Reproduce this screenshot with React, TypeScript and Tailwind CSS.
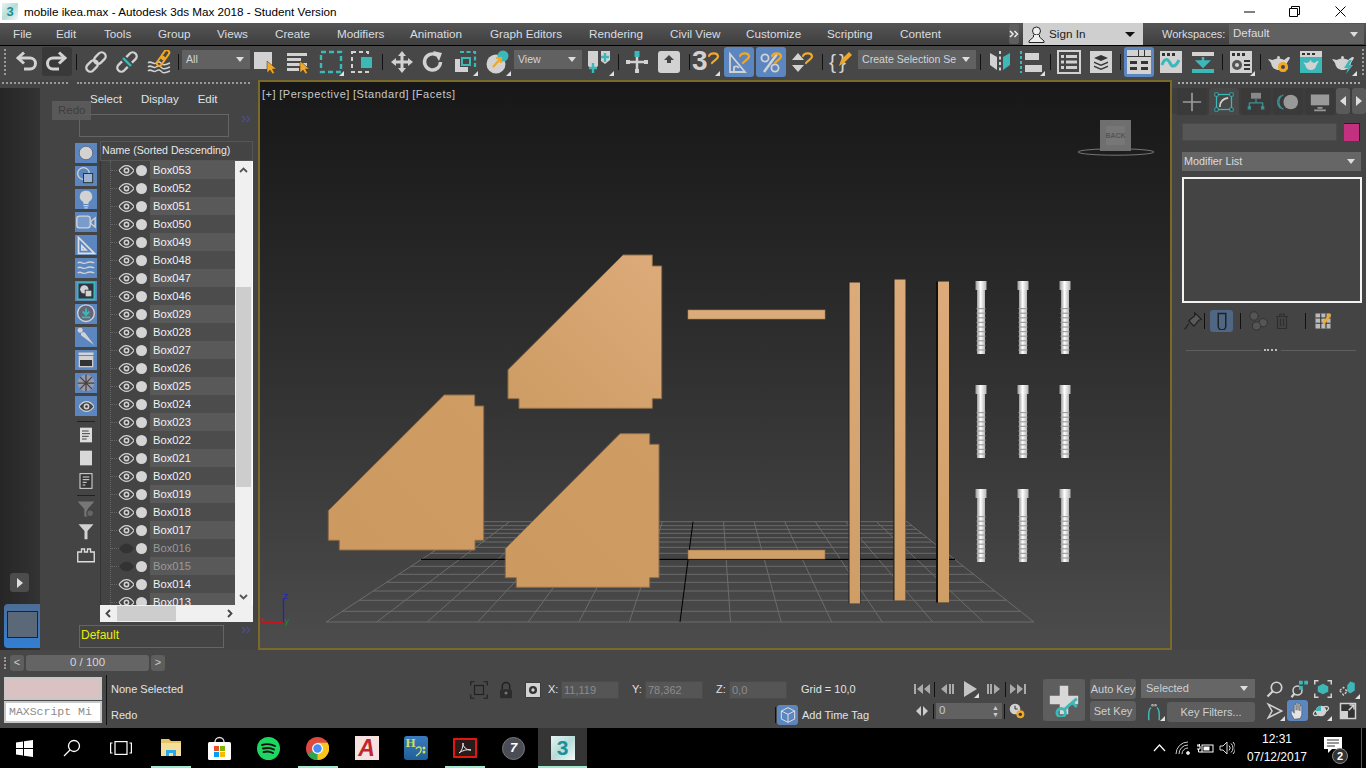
import React from "react";

const L = "#d2d2d2", T = "#3db8b8", O = "#f0a826";
type P = { children?: React.ReactNode };
const I = ({ children, s = 24 }: P & { s?: number }) => (
  <svg width={s} height={s} viewBox="0 0 24 24" fill="none" className="block shrink-0">{children}</svg>
);
const S = ({ c = "", children, fly }: P & { c?: string; fly?: boolean }) => (
  <div className={"relative h-full flex items-center justify-center shrink-0 " + c}>
    {children}
    {fly && <span className="absolute right-[2px] bottom-[1px] w-[5px] h-[5px] bg-[#e0e0e0] [clip-path:polygon(100%_0,100%_100%,0_100%)]" />}
  </div>
);
const Sep = ({ c }: { c: string }) => (
  <div className={"h-full flex items-center justify-center shrink-0 " + c}><div className="w-px h-[16px] bg-[#111]" /></div>
);
const Caret = () => <span className="w-0 h-0 shrink-0 border-l-[4px] border-r-[4px] border-t-[5px] border-l-transparent border-r-transparent border-t-[#ddd]" />;
const Dbl = ({ c = "#4c4c80" }: { c?: string }) => (
  <svg width="10" height="8" viewBox="0 0 10 8" fill="none" stroke={c} strokeWidth="1.500" className="block shrink-0"><path d="M1 1l3 3-3 3M5.500 1l3 3-3 3" /></svg>
);
const Drop = ({ c, t }: { c: string; t: string }) => (
  <div className={"h-[19px] bg-[#616161] flex items-center justify-between gap-[2px] pl-[4px] pr-[6px] shrink-0 " + c}>
    <span className="text-[10.6px] whitespace-nowrap text-[#cfd4d8]">{t}</span><Caret />
  </div>
);
const Hook = () => <path d="M13 6c1-3 8-4 9 0 .5 3-4 4-6 7" stroke={O} strokeWidth="2.2" strokeLinecap="round" />;
const Cursor = () => <path d="M14 11v12l3-3 2.5 4 2-1-2-4h4z" fill={O} stroke="#333" strokeWidth=".5" />;
const Teapot = ({ f = L }: { f?: string }) => (
  <><path d="M6 10c3-2 8-2 11 0l4-3c1 0 2 0 2 1l-3 5c-1 5-4 7-8 7s-7-2-8-7L1 9z" fill={f} /><circle cx="11.5" cy="7.5" r="1.5" fill={f} /></>
);

const Grip = () => <div className="w-[2px] h-[26px] border-l-2 border-dotted border-[#999]" />;

function Toolbar() {
  return (
    <div className="h-[34px] flex items-center bg-[#474747] shrink-0 overflow-hidden pb-[3px]">
      <S c="w-[10px]"><Grip /></S>
      <S c="w-[31px]"><I><path d="M4 8h12a5.5 5.5 0 0 1 0 11h-6" stroke={L} strokeWidth="3" /><path d="M10 2.5L4 8l6 5.5" stroke={L} strokeWidth="3" /></I></S>
      <S c="w-[31px]"><div className="w-[30px] h-[29px] rounded-[3px] bg-[#393939] flex items-center justify-center"><I><g transform="matrix(-1 0 0 1 24 0)"><path d="M4 8h12a5.5 5.5 0 0 1 0 11h-6" stroke={L} strokeWidth="3" /><path d="M10 2.5L4 8l6 5.5" stroke={L} strokeWidth="3" /></g></I></div></S>
      <Sep c="w-[8px]" />
      <S c="w-[31px]"><I><g transform="rotate(-45 12 12)" stroke={L} strokeWidth="2.4"><rect x="0" y="8" width="13" height="8" rx="4" /><rect x="11" y="8" width="13" height="8" rx="4" /></g></I></S>
      <S c="w-[32px]"><I><g transform="rotate(-45 12 12)" stroke={L} strokeWidth="2.4"><path d="M9 8H4a4 4 0 0 0 0 8h5M15 8h5a4 4 0 0 1 0 8h-5" /></g><path d="M8 8l8 8" stroke={T} strokeWidth="2.4" /></I></S>
      <S c="w-[32px]"><I><path d="M1 13c3-3 5 2 8 0s4-1 6 1 5 0 8-1M1 17c3-3 5 2 8 0s4-1 6 1 5 0 8-1M1 21c3-3 5 2 8 0s4-1 6 1 5 0 8-1" stroke={L} strokeWidth="1.5" /><g transform="rotate(-55 16 8)" stroke={O} strokeWidth="2"><rect x="7" y="5.5" width="10" height="5" rx="2.5" /><rect x="15" y="5.5" width="10" height="5" rx="2.5" /></g></I></S>
      <Sep c="w-[6px]" />
      <div className="ml-[1px] shrink-0 mb-[4px]"><Drop c="w-[68px]" t="All" /></div>
      <S c="w-[30px]"><I><rect x="1" y="2" width="18" height="17" fill={L} /><Cursor /></I></S>
      <S c="w-[36px]"><I><path d="M1 3h20v3H1zM1 8h14v3H1zM1 13h20v3H1zM1 18h12v3H1z" fill={L} /><Cursor /></I></S>
      <S c="w-[30px]" fly><I><rect x="2" y="2" width="20" height="20" stroke={T} strokeWidth="2.4" strokeDasharray="5 3" /></I></S>
      <S c="w-[32px]"><I><rect x="2" y="2" width="16" height="20" stroke={L} strokeWidth="2" strokeDasharray="4 3" /><rect x="11" y="7" width="11" height="11" fill={T} /></I></S>
      <Sep c="w-[8px]" />
      <S c="w-[31px]"><I><path d="M12 1l4 5h-2.5v4.5H18V8l5 4-5 4v-2.5h-4.5V18H16l-4 5-4-5h2.5v-4.5H6V16l-5-4 5-4v2.5h4.5V6H8z" fill={L} /></I></S>
      <S c="w-[32px]"><I><path d="M19.5 12a8 8 0 1 1-4-7" stroke={L} strokeWidth="3.4" /><path d="M12 1l9 2-3 8z" fill={L} /></I></S>
      <S c="w-[31px]" fly><I><path d="M7 2h15v15" stroke={T} strokeWidth="2.2" strokeDasharray="4 2.5" /><path d="M2 22V9h5v8h8v5z" fill={L} /><rect x="9" y="8" width="8" height="7" fill="none" stroke={T} strokeWidth="2" /></I></S>
      <S c="w-[33px]" fly><I><circle cx="11" cy="14" r="9.5" fill={L} /><circle cx="18" cy="6" r="5.5" fill={T} /><path d="M8 17l8-9M11 8h5v5" stroke={O} strokeWidth="2.2" /></I></S>
      <div className="ml-[1px] shrink-0 mb-[4px]"><Drop c="w-[68px]" t="View" /></div>
      <S c="w-[34px]" fly><I><path d="M1 1h10v15l-5 4-5-4z" fill={L} /><path d="M14 1h9v9l-5 4-4-3z" fill={L} /><path d="M6 13v10M2 18h8M18 3v9M14 7h8" stroke={T} strokeWidth="2.4" /></I></S>
      <Sep c="w-[4px]" />
      <S c="w-[34px]"><I><path d="M1 12h22M12 6v16" stroke={L} strokeWidth="2.5" /><rect x="9.5" y="1" width="5" height="6" fill={T} /><rect x="1" y="10" width="4" height="4" fill={L} /><rect x="19" y="10" width="4" height="4" fill={L} /><rect x="10" y="19" width="4" height="4" fill={L} /></I></S>
      <S c="w-[30px]"><I><rect x="1" y="1" width="22" height="22" rx="3" fill={L} /><path d="M12 5l-5 5h3v3h4v-3h3z" fill="#444" /></I></S>
      <Sep c="w-[10px]" />
      <S c="w-[28px]" fly><div className="relative w-[24px] h-[24px]"><span className="absolute left-[-4px] top-[-5px] text-[28px] leading-[32px] font-bold text-[#d2d2d2] font-['Liberation_Sans']">3</span><div className="absolute inset-0"><I><Hook /></I></div></div></S>
      <div className="ml-[2px] w-[30px] h-[30px] rounded-[3px] bg-[#5b86bf] flex items-center justify-center shrink-0 mt-[1px]"><I><path d="M3 22V4l15 18zM7 22v-5a4 4 0 0 1 5 1" fill="none" stroke={L} strokeWidth="1.8" /><Hook /></I></div>
      <div className="ml-[2px] w-[30px] h-[30px] rounded-[3px] bg-[#5b86bf] flex items-center justify-center shrink-0 mt-[1px]"><I><circle cx="6" cy="8" r="3.6" stroke={L} strokeWidth="1.8" /><circle cx="16" cy="18" r="3.6" stroke={L} strokeWidth="1.8" /><path d="M5 22L18 4" stroke={L} strokeWidth="2.4" /><Hook /></I></div>
      <S c="w-[32px]"><I><path d="M8 3l6 7H2zM8 22l6-7H2z" fill={L} /><Hook /></I></S>
      <Sep c="w-[8px]" />
      <S c="w-[30px]"><div className="relative w-[24px] h-[24px]"><span className="absolute left-0 top-[-1px] text-[21px] leading-[25px] text-[#d2d2d2] font-['Liberation_Sans'] tracking-[3px]">{"{}"}</span><div className="absolute inset-0"><I><path d="M10 16l2-6 8-8 3 3-8 8z" fill={O} /></I></div></div></S>
      <div className="ml-[2px] shrink-0 mb-[4px]"><Drop c="w-[118px]" t="Create Selection Se" /></div>
      <Sep c="w-[8px]" />
      <S c="w-[31px]"><I><path d="M2 3l7 4v13l-7-5z" fill={L} /><path d="M12 1v22" stroke={L} strokeWidth="2" strokeDasharray="3 2.5" /><path d="M22 3l-7 4v13l7-5z" fill={T} /></I></S>
      <S c="w-[32px]" fly><I><path d="M2 1v22" stroke={T} strokeWidth="2" strokeDasharray="3 2" /><path d="M6 3h14v7H6zM6 15h17v7H6z" fill={L} /></I></S>
      <Sep c="w-[6px]" />
      <S c="w-[32px]"><I><rect x="1" y="1" width="22" height="22" fill="none" stroke={L} strokeWidth="2" /><path d="M4 5h3v3H4zM9 5h11v3H9zM4 10.500h3v3H4zM9 10.500h11v3H9zM4 16h3v3H4zM9 16h11v3H9z" fill={L} /></I></S>
      <S c="w-[32px]"><I><rect x="1" y="1" width="22" height="22" fill={L} /><path d="M12 5l7 3-7 3-7-3zM5 11.500l7 3 7-3v1.500l-7 3-7-3zM5 15.500l7 3 7-3v1.500l-7 3-7-3z" fill="#333" /></I></S>
      <Sep c="w-[6px]" />
      <div className="ml-[1px] w-[30px] h-[30px] rounded-[3px] border-[3px] border-[#5b86bf] flex items-center justify-center shrink-0 mt-[1px]"><I><rect x="0" y="0" width="24" height="24" fill={L} /><path d="M11 0h1v6h-1zM17 0h1v6h-1zM0 6h24v1H0zM3 11h7v3H3zM14 11h7v3H14zM3 17h7v3H3zM14 17h7v3H14z" fill="#333" /></I></div>
      <S c="w-[33px]"><I><rect x="1" y="1" width="22" height="22" fill={L} /><path d="M3 3h3v3H3zM8 3h3v3H8zM13 3h3v3h-3z" fill="#333" /><path d="M3 15c3-8 6-6 8-2s5 5 9-3" stroke={T} strokeWidth="3" /></I></S>
      <S c="w-[32px]"><I><rect x="1" y="2" width="22" height="4" fill={L} /><rect x="1" y="19" width="22" height="4" fill={T} /><path d="M12 7v7M7 11.500l5 5 5-5z" stroke={T} strokeWidth="2.5" fill={T} /></I></S>
      <Sep c="w-[6px]" />
      <S c="w-[32px]" fly><I><rect x="1" y="1" width="22" height="22" fill={L} /><path d="M3 3h3v3H3zM8 3h3v3H8zM13 3h3v3h-3zM15 10h6v2h-6zM15 14h6v2h-6zM15 18h6v2h-6z" fill="#333" /><circle cx="8" cy="15" r="5" fill="#555" /><circle cx="8" cy="15" r="2" fill={L} /></I></S>
      <Sep c="w-[6px]" />
      <S c="w-[32px]"><I><Teapot /><circle cx="16" cy="17" r="5" fill={O} /><circle cx="16" cy="17" r="4" fill="none" stroke={O} strokeWidth="2" strokeDasharray="2 1.500" /><circle cx="16" cy="17" r="2" fill="#444" /></I></S>
      <S c="w-[32px]"><I><rect x="1" y="1" width="22" height="22" fill={T} /><rect x="1" y="1" width="22" height="6" fill={L} /><path d="M3 3h3v2H3zM8 3h3v2H8zM13 3h3v2h-3z" fill="#333" /><g transform="translate(3.500 6) scale(.7)"><Teapot /></g></I></S>
      <S c="w-[32px]" fly><I><Teapot /><path d="M18 10l-5 8h4l-2 6 7-9h-4l3-5z" fill={T} /></I></S>
      <div className="w-[7px] flex justify-center"><Grip /></div>
    </div>
  );
}

const BtnBlue = ({ children }: P) => (
  <div className="w-[22px] h-[20px] bg-[#5b86bf] flex items-center justify-center mb-[3px]">{children}</div>
);
const F = { stroke: L, strokeWidth: 1.6, fill: "none" };

function Filters() {
  return (
    <div className="w-[25px] shrink-0 pt-[2px] flex flex-col items-start">
      <BtnBlue><I s={18}><circle cx="12" cy="12" r="9" fill={L} stroke="#444" strokeWidth=".8" /></I></BtnBlue>
      <BtnBlue><I s={20}><circle cx="9" cy="9" r="7" {...F} /><rect x="9" y="9" width="11" height="11" fill="#9db4d4" stroke="#333" strokeWidth="1.200" /></I></BtnBlue>
      <BtnBlue><I s={20}><path d="M12 2a7 7 0 0 0-4 13c1 1 1 2 1 3h6c0-1 0-2 1-3a7 7 0 0 0-4-13z" fill={L} /><path d="M9 20h6M10 22.500h4" stroke={L} strokeWidth="1.500" /></I></BtnBlue>
      <BtnBlue><I s={20}><rect x="1" y="5" width="16" height="14" rx="3" {...F} fill="#7a9ccc" /><path d="M18 11l5-4v11l-5-4z" {...F} /></I></BtnBlue>
      <BtnBlue><I s={20}><path d="M3 3v19h19zM7 13v5h5z" {...F} strokeWidth={2} stroke="#ddd" /></I></BtnBlue>
      <BtnBlue><I s={20}><path d="M2 6c4-3 6 2 10 0s6-2 10 0M2 12c4-3 6 2 10 0s6-2 10 0M2 18c4-3 6 2 10 0s6-2 10 0" {...F} /></I></BtnBlue>
      <BtnBlue><I s={20}><rect x="2" y="2" width="20" height="20" stroke={T} strokeWidth="2" fill="#334" /><circle cx="10" cy="10" r="5" fill={L} /><rect x="11" y="11" width="8" height="8" fill={L} stroke="#333" /></I></BtnBlue>
      <BtnBlue><I s={20}><circle cx="12" cy="11" r="10" {...F} fill="#667" /><path d="M12 5v7M8 9l4 4 4-4M7 16h10" stroke={T} strokeWidth="2.200" /></I></BtnBlue>
      <BtnBlue><I s={20}><circle cx="5" cy="4" r="3" fill={L} /><path d="M6 7l4-1 12 16L6 10z" fill={L} /></I></BtnBlue>
      <BtnBlue><I s={20}><path d="M3 3h18v3H3z" fill={L} /><rect x="4" y="8" width="16" height="12" fill="#333" stroke={L} strokeWidth="1.500" /><path d="M4 8h16v4H4z" fill={L} /></I></BtnBlue>
      <BtnBlue><I s={20}><circle cx="12" cy="12" r="10" fill="#99a" /><path d="M12 2v20M2 12h20M5 5l14 14M19 5L5 19" stroke="#444" strokeWidth="1.500" /></I></BtnBlue>
      <BtnBlue><Eye /></BtnBlue>
      <div className="w-[18px] h-px bg-[#222] mt-[2px] ml-[2px]" />
      <div className="w-[22px] h-[22px] mt-[2px] flex items-center justify-center"><I s={16}><rect x="3" y="1" width="18" height="22" fill="#ddd" /><path d="M6 6h10M6 10h12M6 14h10M6 18h7" stroke="#444" strokeWidth="1.500" /></I></div>
      <div className="w-[22px] h-[22px] mt-[1px] flex items-center justify-center"><I s={16}><rect x="3" y="1" width="18" height="22" fill="#d8d8d8" /></I></div>
      <div className="w-[22px] h-[22px] mt-[1px] flex items-center justify-center"><I s={16}><rect x="3" y="1" width="18" height="22" fill="#333" stroke="#ddd" strokeWidth="1.500" /><path d="M7 6h10M7 10h10M7 14h6M7 18h4" stroke="#ddd" strokeWidth="1.500" /></I></div>
      <div className="w-[18px] h-px bg-[#222] mt-[3px] ml-[2px]" />
      <div className="w-[22px] h-[22px] mt-[2px] flex items-center justify-center"><I s={20}><path d="M2 3h20l-8 9v9h-4v-9z" fill="#777" /><circle cx="17" cy="17" r="4" fill="#666" stroke="#444" strokeWidth="1.500" /></I></div>
      <div className="w-[22px] h-[22px] mt-[0px] flex items-center justify-center"><I s={18}><path d="M2 3h20l-8 9v11h-4V12z" fill={L} /></I></div>
      <div className="w-[22px] h-[22px] mt-[2px] flex items-center justify-center"><I s={18}><path d="M1 8h5V4h4v4h4V4h4v4h5v13H1z" fill="none" stroke="#ddd" strokeWidth="1.800" /></I></div>
    </div>
  );
}

const Eye = ({ off }: { off?: boolean }) => (
  <svg width="15" height="11" viewBox="0 0 15 11" className="block shrink-0">
    <path d="M0 5.500C3 1.500 5 .7 7.500.7s4.500.8 7.500 4.800c-3 4-5 4.800-7.500 4.800S3 9.500 0 5.500z" fill={off ? "#333" : "#444"} stroke={off ? "none" : L} strokeWidth="1.200" />
    {!off && <circle cx="7.500" cy="5.500" r="2.900" fill={L} />}
    {!off && <circle cx="7.500" cy="5.500" r="1.300" fill="#333" />}
  </svg>
);

const names = ["053","052","051","050","049","048","047","046","029","028","027","026","025","024","023","022","021","020","019","018","017","016","015","014","013"];

function Explorer() {
  return (
    <div className="relative w-[218px] bg-[#444] flex flex-col shrink-0">
      <div className="h-[24px] pl-[50px] flex items-center gap-[19px] text-[11.5px] text-[#dfe3e6]">
        <span>Select</span><span>Display</span><span>Edit</span>
      </div>
      <div className="h-[29px] flex items-start pt-[2px] pl-[39px]">
        <div className="w-[150px] h-[23px] border border-[#656565]" />
        <span className="ml-[12px] mt-[1px]"><Dbl /></span>
      </div>
      <div className="flex pl-[35px]">
        <Filters />
        <div className="w-[153px] shrink-0">
          <div className="h-[20px] border border-[#565656] bg-[#444] pl-[1px] text-[10.6px] text-[#e6e8ea] flex items-center whitespace-nowrap">Name (Sorted Descending)</div>
          <div className="flex h-[444px] bg-white">
            <div className="relative w-[135px] overflow-hidden bg-[#444] border-l border-[#333]">
              <div className="absolute left-[9px] top-0 bottom-0 border-l border-dotted border-[#666]" />
              {names.map((n, i) => {
                const off = n === "016" || n === "015";
                return (
                  <div key={n} className="flex items-center h-[18px]">
                    <div className="ml-[10px] w-[8px] border-t border-dotted border-[#666]" />
                    <div className="w-[15px] flex justify-center"><Eye off={off} /></div>
                    <div className="w-[15px] flex justify-center"><span className="w-[11px] h-[11px] rounded-full bg-[#d4d4d4]" /></div>
                    <div className={(i % 2 === 0 ? "bg-[#595959] " : "bg-[#4c4c4c] ") + (off ? "text-[#9a9a9a] " : "text-[#f2f2f2] ") + "h-[18px] flex-1 pl-[3px] text-[11.2px] leading-[18px] ml-[1px]"}>{"Box" + n}</div>
                  </div>
                );
              })}
            </div>
            <div className="relative w-[17px] bg-[#f0f0f0] pt-[126px]">
              <div className="h-[200px] bg-[#cdcdcd] mx-[1px]" />
              <svg className="absolute left-[4px] top-[6px]" width="9" height="6" viewBox="0 0 9 6"><path d="M1 5l3.500-3.500L8 5" stroke="#555" strokeWidth="1.800" fill="none" /></svg>
              <svg className="absolute left-[4px] bottom-[5px]" width="9" height="6" viewBox="0 0 9 6"><path d="M1 1l3.500 3.500L8 1" stroke="#555" strokeWidth="1.800" fill="none" /></svg>
            </div>
          </div>
          <div className="h-[17px] bg-[#f0f0f0] flex items-center relative">
            <div className="ml-[17px] w-[59px] h-[15px] bg-[#cdcdcd]" />
            <svg className="absolute left-[5px] top-[4px]" width="6" height="9" viewBox="0 0 6 9"><path d="M5 1L1.500 4.500 5 8" stroke="#444" strokeWidth="1.800" fill="none" /></svg>
            <svg className="absolute right-[20px] top-[4px]" width="6" height="9" viewBox="0 0 6 9"><path d="M1 1l3.500 3.500L1 8" stroke="#444" strokeWidth="1.800" fill="none" /></svg>
          </div>
        </div>
      </div>
      <div className="flex pl-[39px] pt-[3px]">
        <div className="w-[145px] h-[23px] border border-[#656565] pl-[1px] text-[12px] leading-[19px] text-[#e8f000]">Default</div>
        <span className="ml-[17px] mt-[1px]"><Dbl /></span>
      </div>
      <div className="absolute left-[12px] top-[13px] w-[39px] h-[19px] bg-[#5c5c5c]/90 text-[11.5px] text-[#3e3e3e] pl-[6px] leading-[19px]">Redo</div>
    </div>
  );
}

const hl = [521.7, 525.7, 529.3, 533.3, 537.7, 542, 547.3, 553.3, 559.3, 566.3, 574.3, 582.3, 591, 600.3, 611.3, 622];

const pts = {
  a: "623,255 652.3,255 652.3,266 661.7,266 661.7,398.7 652.3,398.7 652.3,408.3 519,408.3 519,398.7 508,398.7 508,369.7",
  b: "444.3,395 474.7,395 474.7,406 483.7,406 483.7,540.3 475,540.3 475,550 339.3,550 339.3,540.3 328.3,540.3 328.3,510.7",
  c: "620,433.7 649.7,433.7 649.7,444.3 659,444.3 659,577.7 649.7,577.7 649.7,587.3 516.3,587.3 516.3,577.7 505.3,577.7 505.3,548.7",
};

const Screw = ({ x, y }: { x: number; y: number }) => (
  <g transform={`translate(${x} ${y})`}>
    <rect x="-5.500" y="0" width="11" height="9" fill="url(#sw)" />
    <rect x="-4" y="9" width="8" height="18" fill="url(#sw)" />
    <rect x="-4" y="26" width="8" height="47" fill="url(#sw)" />
    {[0, 1, 2, 3, 4, 5, 6, 7, 8, 9].map((i) => <rect key={i} x="-4.500" y={27 + i * 4.6} width="9" height="1.200" fill="#a0a0a0" />)}
  </g>
);

function Viewport() {
  return (
    <div className="relative w-[914px] border-2 border-[#7a6a2a] bg-gradient-to-b from-[#171717] via-[#303030] to-[#4c4c4c] shrink-0">
      <svg width="910" height="566" viewBox="260 82 910 566" className="block">
        <defs>
          <linearGradient id="pa" x1="1" y1="0" x2="0" y2="1"><stop offset="0" stopColor="#dcab7a" /><stop offset="1" stopColor="#cd9b63" /></linearGradient>
          <linearGradient id="pb" x1="1" y1="0" x2="0" y2="1"><stop offset="0" stopColor="#cf9d64" /><stop offset="1" stopColor="#cc9960" /></linearGradient>
          <linearGradient id="pv" x1="0" y1="0" x2="0" y2="1"><stop offset="0" stopColor="#dcab7a" /><stop offset="1" stopColor="#cf9d66" /></linearGradient>
          <linearGradient id="sw" x1="0" y1="0" x2="1" y2="0"><stop offset="0" stopColor="#9a9a9a" /><stop offset=".45" stopColor="#ffffff" /><stop offset="1" stopColor="#b5b5b5" /></linearGradient>
        </defs>
        {hl.map((y) => {
          const t = (622 - y) / 100.3;
          return <line key={y} x1={326 + 153 * t} x2={1034 - 127 * t} y1={y} y2={y} stroke="#6c6c6c" strokeWidth="1" />;
        })}
        {Array.from({ length: 15 }, (_, i) => i).map((i) => (
          <line key={i} x1={326 + i * 50.57} y1={622} x2={479 + i * 30.57} y2={521.7} stroke={i === 7 ? "#000" : "#6c6c6c"} strokeWidth="1" />
        ))}
        <line x1="421" x2="955" y1="559.3" y2="559.3" stroke="#000" strokeWidth="1.200" />
        <polygon points={pts.a} fill="url(#pa)" stroke="#8c6c48" strokeWidth="1" />
        <polygon points={pts.b} fill="url(#pb)" stroke="#8c6c48" strokeWidth="1" />
        <polygon points={pts.c} fill="url(#pb)" stroke="#8c6c48" strokeWidth="1" />
        <rect x="688" y="310" width="137" height="9" fill="#dcab7a" stroke="#a5815a" strokeWidth=".6" />
        <rect x="688" y="550" width="137" height="9" fill="#cf9f68" stroke="#8c6c48" strokeWidth=".6" />
        <rect x="848.500" y="282.500" width="12" height="321" fill="#222" />
        <rect x="849.500" y="282.500" width="10.500" height="321" fill="url(#pv)" />
        <rect x="893.300" y="279.500" width="12.500" height="321" fill="#222" />
        <rect x="894.500" y="279.500" width="11" height="321" fill="url(#pv)" />
        <rect x="936" y="281.500" width="13" height="321" fill="#111" />
        <rect x="938" y="281.500" width="11" height="321" fill="url(#pv)" />
        {[281, 385, 489].map((y) => [981, 1023, 1065].map((x) => <Screw key={x + "-" + y} x={x} y={y} />))}
        <ellipse cx="1116" cy="152" rx="38" ry="3.200" fill="none" stroke="#777" strokeWidth="1" />
        <rect x="1100" y="120" width="31" height="31" fill="#6f6f6f" />
        <rect x="1106" y="126" width="19" height="19" fill="#777" />
        <text x="1115.500" y="138" textAnchor="middle" fontSize="7" fontWeight="700" fill="#555" fontFamily="Liberation Sans, sans-serif">BACK</text>
        <path d="M283.500 622.500H263" stroke="#c8141a" strokeWidth="1.300" />
        <path d="M283.500 622.500V598" stroke="#2020d0" strokeWidth="1.300" />
        <text x="259" y="623" fontSize="9" fill="#c8141a" fontFamily="Liberation Sans, sans-serif">x</text>
        <text x="283.500" y="599" fontSize="9" fill="#2020d0" fontFamily="Liberation Sans, sans-serif">z</text>
        <text x="284.500" y="624" fontSize="9" fill="#1e8a1e" fontFamily="Liberation Sans, sans-serif">y</text>
      </svg>
      <div className="absolute left-[2px] top-[5px] flex gap-[3px] text-[11px] leading-[14px] tracking-[0.55px] text-[#c8c8c8] whitespace-nowrap">
        <span>[+]</span><span>[Perspective]</span><span>[Standard]</span><span>[Facets]</span>
      </div>
    </div>
  );
}

function CmdPanel() {
  const Tab = ({ c, active, children }: P & { c: string; active?: boolean }) => (
    <div className={"w-[30px] h-[27px] rounded-t-[4px] flex items-center justify-center " + (active ? "bg-[#484848] " : "bg-[#3a3a3a] ") + c}>{children}</div>
  );
  const Small = ({ c, children }: P & { c: string }) => <div className={"flex items-center justify-center shrink-0 " + c}>{children}</div>;
  const dark = "#2e2e2e";
  return (
    <div className="w-[194px] bg-[#444] flex flex-col shrink-0 overflow-hidden">
      <div className="h-[8px] pt-[2px] pl-[6px] pr-[6px]"><div className="border-t-2 border-dotted border-[#aaa]" /></div>
      <div className="flex h-[26px] pl-[5px] gap-[2px] bg-[#3d3d3d]">
        <Tab c=""><I s={20}><path d="M12 1v22M1 12h22" stroke="#9b9b9b" strokeWidth="2" /></I></Tab>
        <Tab c="" active><I s={20}><rect x="3" y="3" width="18" height="18" stroke={T} strokeWidth="1.500" /><path d="M1 1h4v4H1zM19 1h4v4h-4zM1 19h4v4H1zM19 19h4v4h-4z" fill="#333" stroke={T} /><path d="M7 18c0-6 3-10 10-11" stroke={L} strokeWidth="2" /></I></Tab>
        <Tab c=""><I s={20}><rect x="6" y="1" width="12" height="7" fill="#888" /><path d="M12 8v5M4 13h16v4M4 13v4" stroke={T} strokeWidth="1.500" opacity=".7" /><rect x="2" y="17" width="4" height="4" fill={T} opacity=".7" /><rect x="18" y="17" width="4" height="4" fill={T} opacity=".7" /></I></Tab>
        <Tab c=""><I s={22}><circle cx="15" cy="12" r="8" fill="#999" /><path d="M7 4a9 9 0 0 0 0 16M4 5a9 9 0 0 0 0 14" stroke={T} strokeWidth="1.200" opacity=".7" /></I></Tab>
        <Tab c=""><I s={20}><rect x="1" y="3" width="22" height="13" fill="#999" /><path d="M9 19h6M5 22h14" stroke="#999" strokeWidth="2" /></I></Tab>
        <div className="w-[14px] h-[26px] rounded-[3px] bg-[#5a5a5a] flex items-center justify-center ml-[-1px]"><span className="w-0 h-0 border-y-[5px] border-y-transparent border-r-[6px] border-r-[#ddd]" /></div>
        <div className="w-[14px] h-[26px] rounded-[3px] bg-[#5a5a5a] flex items-center justify-center"><span className="w-0 h-0 border-y-[5px] border-y-transparent border-l-[6px] border-l-[#ddd]" /></div>
      </div>
      <div className="flex pl-[10px] pt-[9px]">
        <div className="w-[155px] h-[18px] bg-[#565656] border border-[#4a4a4a]" />
        <div className="ml-[7px] w-[16px] h-[18px] bg-[#c2307f] border-t border-r border-[#222]" />
      </div>
      <div className="pl-[10px] pt-[11px]"><div className="w-[179px] h-[19px] bg-[#666] flex items-center justify-between pl-[2px] pr-[6px]"><span className="text-[10.8px] text-[#d9dde0]">Modifier List</span><Caret /></div></div>
      <div className="pl-[10px] pt-[6px]"><div className="w-[180px] h-[126px] border-2 border-[#f2f2f2] bg-[#444]" /></div>
      <div className="flex items-center h-[22px] mt-[7px] pl-[10px]">
        <Small c="w-[22px]"><I s={20}><path d="M14 2l8 8-3 1-4 5-2 2-6-6 2-2 5-4zM7 15l-5 7" stroke="#222" strokeWidth="1.500" fill="#5a5a5a" /></I></Small>
        <div className="w-px h-[16px] bg-[#111]" />
        <Small c="w-[5px]"><span /></Small>
        <div className="w-[23px] h-[22px] rounded-[3px] bg-[#4f6685] flex items-center justify-center"><I s={18}><path d="M7 2h10v17a5 5 0 0 1-10 0z" fill="none" stroke="#222" strokeWidth="2" /></I></div>
        <Small c="w-[7px]"><span /></Small>
        <div className="w-px h-[16px] bg-[#111]" />
        <Small c="w-[36px]"><I s={20}><circle cx="6" cy="6" r="5" fill="#555" stroke={dark} /><circle cx="17" cy="14" r="5" fill="#555" stroke={dark} /><circle cx="9" cy="18" r="5" fill="#555" stroke={dark} /></I></Small>
        <Small c="w-[10px]"><I s={18}><path d="M4 6h16M9 6V3h6v3M6 6v16h12V6M10 9v10M14 9v10" stroke={dark} strokeWidth="1.500" /></I></Small>
        <Small c="w-[18px]"><span /></Small>
        <div className="w-px h-[16px] bg-[#111]" />
        <Small c="w-[34px]"><I s={18}><rect x="2" y="2" width="20" height="20" fill="#bbb" /><path d="M2 8h20M2 15h20M9 2v20M16 2v20" stroke="#333" strokeWidth="1.500" /><path d="M11 15l9-13 3 2-9 13z" fill={O} /></I></Small>
      </div>
      <div className="flex items-center h-[4px] mt-[16px] pl-[14px]">
        <div className="w-[75px] h-px bg-[#5e5e5e]" />
        <div className="w-[13px] ml-[3px] border-t-2 border-dotted border-[#bbb]" />
        <div className="w-[75px] ml-[4px] h-px bg-[#5e5e5e]" />
      </div>
      <div className="flex-1" />
    </div>
  );
}

const Inp = ({ v }: { v: string }) => (
  <div className="w-[58px] h-[18px] bg-[#555] border border-[#4b4b4b] pl-[2px] text-[11px] leading-[17px] text-[#8c8c8c] shrink-0">{v}</div>
);
const Lab = ({ c, t }: { c: string; t: string }) => <span className={"text-[11px] text-[#e0e3e6] shrink-0 " + c}>{t}</span>;

function Bottom() {
  return (
    <div className="h-[78px] bg-[#474747] flex flex-col shrink-0">
      <div className="h-[27px] flex items-start pt-[5px] shrink-0">
        <div className="w-[10px] flex justify-center pt-[2px]"><div className="h-[12px] border-l-2 border-dotted border-[#999]" /></div>
        <div className="w-[14px] h-[16px] rounded-[3px] bg-[#5e5e5e] text-[#ccc] text-[11px] leading-[15px] text-center">{"<"}</div>
        <div className="ml-[2px] w-[123px] h-[16px] rounded-[3px] bg-[#646464] text-[#d4d8dc] text-[11.5px] leading-[15px] text-center">0 / 100</div>
        <div className="ml-[2px] w-[14px] h-[16px] rounded-[3px] bg-[#5e5e5e] text-[#ccc] text-[11px] leading-[15px] text-center">{">"}</div>
      </div>
      <div className="flex flex-1">
        <div className="ml-[4px] w-[98px] shrink-0 flex flex-col gap-[1px]">
          <div className="h-[23px] bg-[#dbc2c2] border-2 border-[#c8c8c8]" />
          <div className="h-[22px] bg-white border-2 border-[#c8c8c8] text-[11.5px] leading-[18px] pl-[3px] text-[#8c8c8c] font-['Liberation_Mono'] overflow-hidden whitespace-nowrap">MAXScript Mi</div>
        </div>
        <div className="ml-[4px] w-px h-[50px] bg-[#111] mt-[-2px]" />
        <div className="ml-[4px] flex-col flex w-[805px] shrink-0">
          <div className="flex items-center h-[25px]">
            <Lab c="w-[354px]" t="None Selected" />
            <S c="w-[27px]"><I s={18}><path d="M1 6V1h5M18 1h5v5M1 18v5h5M18 23h5v-5" stroke="#222" strokeWidth="1.600" /><rect x="6" y="6" width="12" height="12" stroke="#222" strokeWidth="1.600" /></I></S>
            <S c="w-[27px]"><I s={18}><path d="M7 11V7a5 5 0 0 1 10 0v4" stroke="#222" strokeWidth="2" /><rect x="4" y="11" width="16" height="12" rx="2" fill="#2c2c2c" /><circle cx="12" cy="16" r="2" fill="#777" /></I></S>
            <S c="w-[27px]"><I s={16}><rect x="1" y="1" width="22" height="22" fill={L} stroke="#222" /><circle cx="12" cy="12" r="6" fill="#333" /><circle cx="12" cy="12" r="2.500" fill={L} /></I></S>
            <Lab c="w-[13px] ml-[2px]" t="X:" />
            <Inp v="11,119" />
            <Lab c="w-[13px] ml-[13px]" t="Y:" />
            <Inp v="78,362" />
            <Lab c="w-[13px] ml-[13px]" t="Z:" />
            <Inp v="0,0" />
            <Lab c="ml-[14px]" t="Grid = 10,0" />
          </div>
          <div className="flex items-center h-[26px]">
            <Lab c="w-[664px]" t="Redo" />
            <div className="w-px h-[16px] bg-[#111]" />
            <div className="ml-[1px] w-[21px] h-[20px] rounded-[3px] bg-[#5b86bf] flex items-center justify-center"><I s={16}><path d="M12 1l10 5v12l-10 5-10-5V6zM2 6l10 5 10-5M12 11v12" stroke="#e0e0e0" strokeWidth="1.500" /></I></div>
            <Lab c="ml-[4px]" t="Add Time Tag" />
          </div>
        </div>
        <div className="w-[20px] shrink-0" />
        <div className="flex flex-col w-[118px] shrink-0 ml-[-25px] mt-[2px]">
          <div className="h-[20px] flex items-center">
            <S c="w-[22px]"><svg width="16" height="10" viewBox="0 0 16 10"><path d="M0 0h2v10H0zM9 0v10L3 5zM16 0v10l-6-5z" fill="#aaa" /></svg></S>
            <div className="w-px h-[15px] bg-[#111] ml-[1px]" />
            <S c="w-[24px]"><svg width="15" height="10" viewBox="0 0 15 10"><path d="M7 0v10L1 5zM9 0h2v10H9zM12 0h2v10h-2z" fill="#aaa" /></svg></S>
            <S c="w-[22px]" fly><svg width="14" height="16" viewBox="0 0 14 16"><path d="M1 0l13 8-13 8z" fill="#c4c4c4" /></svg></S>
            <S c="w-[24px]"><svg width="15" height="10" viewBox="0 0 15 10"><path d="M1 0h2v10H1zM4 0h2v10H4zM8 0l6 5-6 5z" fill="#aaa" /></svg></S>
            <div className="w-px h-[15px] bg-[#111]" />
            <S c="w-[23px]"><svg width="16" height="10" viewBox="0 0 16 10"><path d="M0 0l6 5-6 5zM7 0l6 5-6 5zM14 0h2v10h-2z" fill="#aaa" /></svg></S>
          </div>
          <div className="h-[16px] mt-[4px] flex items-center">
            <S c="w-[22px]"><svg width="12" height="10" viewBox="0 0 12 10"><path d="M5 0v10L0 5zM7 0v10l5-5z" fill="#ccc" /></svg></S>
            <div className="w-px h-[15px] bg-[#111]" />
            <div className="ml-[2px] w-[68px] h-[16px] bg-[#616161] flex items-center justify-between pl-[3px] pr-[3px] text-[11.5px] text-[#c4c8cc]"><span>0</span><span className="text-[7px] leading-[7px] text-[#ccc] flex flex-col"><span>▲</span><span>▼</span></span></div>
            <div className="w-px h-[15px] bg-[#111] ml-[2px]" />
            <S c="w-[24px]"><I s={16}><circle cx="9" cy="9" r="8" fill={L} /><path d="M9 4v5h4" stroke="#333" strokeWidth="1.500" /><circle cx="17" cy="17" r="6" fill={O} /><circle cx="17" cy="17" r="2.500" fill="#333" /></I></S>
          </div>
        </div>
        <div className="ml-[14px] mt-[2px] w-[42px] h-[42px] rounded-[3px] bg-[#5e5e5e] flex items-center justify-center shrink-0"><I s={34}><path d="M9 2h6v7h7v6h-7v7H9v-7H2V9h7z" fill="#d8d8d8" /><circle cx="10" cy="21" r="3" fill="none" stroke={T} strokeWidth="2" /><path d="M12 19l9-8M18 14l3 3" stroke={T} strokeWidth="2" /></I></div>
        <div className="ml-[5px] mt-[2px] w-[46px] flex flex-col gap-[2px] shrink-0">
          <div className="h-[20px] rounded-[3px] bg-[#5e5e5e] text-[11px] leading-[20px] text-[#ccd0d4] text-center whitespace-nowrap">Auto Key</div>
          <div className="h-[20px] rounded-[3px] bg-[#5e5e5e] text-[11px] leading-[20px] text-[#ccd0d4] text-center whitespace-nowrap">Set Key</div>
        </div>
        <div className="ml-[5px] mt-[2px] w-[114px] flex flex-col shrink-0">
          <div className="h-[19px] bg-[#666] flex items-center justify-between pl-[5px] pr-[7px]"><span className="text-[11px] text-[#ccd0d4]">Selected</span><Caret /></div>
          <div className="flex h-[20px] mt-[4px]">
            <S c="w-[26px]" fly><I s={18}><path d="M5 23c0-8-1-14 3-17M19 23c0-8 1-14-3-17" stroke={T} strokeWidth="2" /><path d="M9 2h2v2H9zM13 2h2v2h-2z" stroke={L} /></I></S>
            <div className="w-[88px] rounded-[3px] bg-[#5e5e5e] text-[11px] leading-[20px] text-[#ccd0d4] text-center">Key Filters...</div>
          </div>
        </div>
        <div className="ml-[8px] w-[103px] shrink-0 mt-[1px]">
          <div className="flex h-[22px]">
            <S c="w-[24px]"><I s={18}><circle cx="14" cy="10" r="7" stroke={L} strokeWidth="2.200" /><path d="M9 15l-7 7" stroke={L} strokeWidth="3" /></I></S>
            <S c="w-[24px]"><I s={18}><circle cx="10" cy="14" r="6" stroke={L} strokeWidth="2" /><path d="M6 18l-4 5" stroke={L} strokeWidth="3" /><path d="M12 1h5v5h-5zM19 1h5v5h-5zM12 8h5v5h-5z" fill={T} /></I></S>
            <S c="w-[23px]"><I s={18}><path d="M1 6V1h5M18 1h5v5M1 18v5h5M18 23h5v-5" stroke={L} strokeWidth="2" /><path d="M12 5l7 3.500v7L12 19l-7-3.500v-7z" fill={T} /></I></S>
            <S c="w-[28px]" fly><I s={18}><path d="M11 7l4-5 6 2v10l-6 4-4-3z" fill={T} /><path d="M1 14l5-4 5 5-5 5z" fill="none" stroke={L} strokeWidth="1.800" strokeDasharray="3 2" /></I></S>
          </div>
          <div className="flex h-[22px]">
            <S c="w-[24px]" fly><I s={18}><path d="M3 3l18 9-18 9 5-9z" stroke={L} strokeWidth="2" /></I></S>
            <div className="w-[21px] h-[21px] rounded-[3px] bg-[#5b86bf] flex items-center justify-center shrink-0"><I s={18}><path d="M7 23l-4-7V11l2 1 2 3V4a1.300 1.300 0 0 1 2.500 0v7-9a1.300 1.300 0 0 1 2.500 0v9-8a1.300 1.300 0 0 1 2.500 0v9-6a1.300 1.300 0 0 1 2.500 0v11l-2 5z" fill="#e4e4e4" stroke="#444" strokeWidth=".7" /></I></div>
            <S c="w-[26px]" fly><I s={18}><ellipse cx="12" cy="12" rx="11" ry="4" stroke={L} strokeWidth="1.500" transform="rotate(-25 12 12)" /><circle cx="12" cy="12" r="7" fill={L} /><path d="M12 5a7 7 0 0 0-7 7h7z" fill={T} /></I></S>
            <S c="w-[28px]"><I s={18}><rect x="2" y="2" width="20" height="20" stroke={L} strokeWidth="2" fill="#333" /><path d="M2 22V12h10v10z" fill={L} /><path d="M13 11l7-7M14 4h6v6" stroke={L} strokeWidth="2" /></I></S>
          </div>
        </div>
      </div>
    </div>
  );
}

const Under = ({ w = "left-[5px] right-[4px]" }: { w?: string }) => <span className={"absolute bottom-0 h-[2px] bg-[#a0e8cc] " + w} />;
const TB = ({ children, u, sel }: P & { u?: boolean; sel?: boolean }) => (
  <div className={"relative w-[49px] h-full flex items-center justify-center shrink-0 " + (sel ? "bg-[#353535]" : "")}>
    {children}
    {u && <Under w={sel ? "left-0 right-0" : "left-[5px] right-[4px]"} />}
  </div>
);
const Logo3 = ({ s, big }: { s: string; big?: boolean }) => (
  <div className={"relative flex items-center justify-center bg-gradient-to-br from-[#e6f4f2] via-[#b7dcd8] to-[#f4fbfa] " + s}>
    <span className={"font-['Liberation_Sans'] font-bold text-[#1d8f97] " + (big ? "text-[21px] leading-[24px]" : "text-[13px] leading-[16px]")}>3</span>
  </div>
);

function Taskbar() {
  return (
    <div className="h-[40px] bg-black flex items-center shrink-0 relative">
      <div className="w-[48px] h-full flex items-center justify-center shrink-0"><svg width="17" height="17" viewBox="0 0 17 17"><path d="M0 2.500l7-1v6.500H0zM8 1.300L17 0v8H8zM0 9h7v6.500l-7-1zM8 9h9v8l-9-1.300z" fill="#fff" /></svg></div>
      <div className="w-[48px] h-full flex items-center justify-center shrink-0"><svg width="18" height="18" viewBox="0 0 18 18" fill="none" stroke="#fff" strokeWidth="1.300"><circle cx="11" cy="7" r="5.500" /><path d="M7 11l-6 6" /></svg></div>
      <div className="w-[50px] h-full flex items-center justify-center shrink-0"><svg width="22" height="14" viewBox="0 0 22 14" fill="none" stroke="#fff" strokeWidth="1.200"><rect x="5" y=".6" width="12" height="12.800" /><path d="M2.500 2H.6v10h1.900M19.500 2h1.900v10h-1.900" /></svg></div>
      <TB u><svg width="22" height="20" viewBox="0 0 22 20"><path d="M1 1h8l2 2h10v15H1z" fill="#e8c468" /><rect x="1" y="5" width="20" height="13" fill="#f5dd9a" /><path d="M6 18v-6h10v6h-3v-3H9v3z" fill="#2aa8e8" /></svg></TB>
      <TB><svg width="23" height="24" viewBox="0 0 23 24"><path d="M7 6a4.500 4.500 0 0 1 9 0" stroke="#ddd" strokeWidth="1.300" fill="none" /><rect x="0" y="6" width="23" height="18" rx="1.500" fill="#fff" /><rect x="6" y="10" width="5" height="5" fill="#e8502a" /><rect x="12" y="10" width="5" height="5" fill="#7eb900" /><rect x="6" y="16" width="5" height="5" fill="#00a2ed" /><rect x="12" y="16" width="5" height="5" fill="#fdb900" /></svg></TB>
      <TB><svg width="23" height="23" viewBox="0 0 23 23" fill="none"><circle cx="11.500" cy="11.500" r="11.500" fill="#1ed760" /><path d="M5 8c4-1.200 9-1 13 1M6 11.500c4-1 7.500-.8 11 1M6.500 15c3-.7 6.500-.6 9.500 1" stroke="#111" strokeWidth="1.900" strokeLinecap="round" /></svg></TB>
      <TB u><svg width="23" height="23" viewBox="0 0 24 24"><circle cx="12" cy="12" r="12" fill="#dd4b3e" /><path d="M12 12L1.600 18A12 12 0 0 0 12 24c1 0 2 0 3-.4z" fill="#2ea651" /><path d="M12 6h10.500A12 12 0 0 1 12 24z" fill="#f7c51e" /><circle cx="12" cy="12" r="5.700" fill="#fff" /><circle cx="12" cy="12" r="4.400" fill="#4a8bf5" /></svg></TB>
      <TB><div className="w-[24px] h-[24px] bg-[#f6e2e0] flex items-center justify-center font-['Liberation_Sans'] font-bold italic text-[#c1272d] text-[23px] leading-[24px]">A</div></TB>
      <TB><div className="relative w-[24px] h-[24px] rounded-[3px] bg-gradient-to-b from-[#3b7bbd] to-[#1d5f9a] text-[#c8e060] font-['Liberation_Serif'] font-bold text-[13px] leading-[14px] pl-[2px]">H
        <svg className="absolute right-[2px] bottom-[3px]" width="11" height="12" viewBox="0 0 11 12" fill="none" stroke="#c8e060" strokeWidth="1.400"><path d="M1 4a3 3 0 0 1 5-1c1 3-2 6-5 8" /><circle cx="9" cy="3" r=".8" /><circle cx="9" cy="7" r=".8" /></svg>
      </div></TB>
      <TB u><div className="w-[24px] h-[20px] border-2 border-[#e0170f] bg-[#2a1a1a] flex items-center justify-center"><svg width="14" height="12" viewBox="0 0 14 12" fill="none"><path d="M1 11c3-2 4-6 4-10 0 4 3 7 8 7-5-1-9 1-12 3z" stroke="#eee" strokeWidth="1" /></svg></div></TB>
      <TB><div className="w-[23px] h-[23px] rounded-full bg-[#4a4d55] border border-[#777] flex items-center justify-center text-[13px] font-bold text-white font-['Liberation_Sans'] italic">7</div></TB>
      <TB u sel><Logo3 s="w-[24px] h-[24px]" big /></TB>
      <div className="flex-1" />
      <div className="w-[24px] flex justify-center shrink-0"><svg width="13" height="8" viewBox="0 0 13 8" fill="none" stroke="#fff" strokeWidth="1.200"><path d="M1 7l5.500-6L12 7" /></svg></div>
      <div className="w-[24px] flex justify-center shrink-0"><svg width="16" height="14" viewBox="0 0 16 14" fill="none" stroke="#ccc" strokeWidth="1"><path d="M1 13A12 12 0 0 1 13 1M4 13a9 9 0 0 1 9-9M7 13a6 6 0 0 1 6-6" /><circle cx="13" cy="12" r="1.500" fill="#fff" /></svg></div>
      <div className="w-[21px] flex justify-center shrink-0"><svg width="17" height="10" viewBox="0 0 17 10" fill="none"><rect x="5" y="2" width="11" height="7" stroke="#fff" /><rect x="6.500" y="3.500" width="6" height="4" fill="#fff" /><path d="M0 3h3v3H0M1 1v2M2.500 1v2M1.500 6v3H5" stroke="#fff" /></svg></div>
      <div className="w-[22px] flex justify-center shrink-0"><svg width="16" height="14" viewBox="0 0 16 14" fill="none" stroke="#ddd"><path d="M1 5h3l4-4v12l-4-4H1zM10 4.500a3.500 3.500 0 0 1 0 5M12 2.500a6 6 0 0 1 0 9M14 1a8.500 8.500 0 0 1 0 12" /></svg></div>
      <div className="w-[74px] ml-[2px] text-center text-[12px] leading-[18px] text-white shrink-0"><div>12:31</div><div className="whitespace-nowrap">07/12/2017</div></div>
      <div className="relative w-[33px] ml-[2px] h-full flex items-center justify-center shrink-0">
        <svg width="18" height="16" viewBox="0 0 18 16" className="mt-[-6px]"><path d="M0 0h18v12H8l-4 4v-4H0z" fill="#fff" /><path d="M3 3h12M3 6h12M3 9h8" stroke="#333" /></svg>
        <span className="absolute left-[16px] top-[20px] w-[16px] h-[16px] rounded-full bg-[#333] border border-[#888] text-[11px] leading-[14px] font-bold text-center text-white">2</span>
      </div>
      <div className="ml-[12px] w-px h-full bg-[#555] mr-[4px]" />
    </div>
  );
}

export default function App() {
  return (
    <div className="w-[1366px] h-[768px] overflow-hidden flex flex-col bg-[#474747] font-['Liberation_Sans','Noto_Sans',sans-serif]">
      <div className="h-[23px] bg-white flex items-center shrink-0">
        <div className="ml-[2px] w-[22px] flex justify-start"><Logo3 s="w-[16px] h-[17px]" /></div>
        <span className="text-[11.7px] text-black whitespace-nowrap">mobile ikea.max - Autodesk 3ds Max 2018 - Student Version</span>
        <div className="flex-1" />
        <svg width="11" height="2" viewBox="0 0 11 2" className="mr-[34px]"><path d="M0 1h11" stroke="#000" /></svg>
        <svg width="11" height="11" viewBox="0 0 11 11" fill="none" stroke="#000" className="mr-[35px]"><path d="M.5 2.500h8v8h-8zM2.500 2.500v-2h8v8h-2" /></svg>
        <svg width="11" height="11" viewBox="0 0 11 11" stroke="#000" className="mr-[20px]"><path d="M.5.5l10 10M10.500.5l-10 10" /></svg>
      </div>
      <div className="h-[23px] bg-gradient-to-b from-[#555] to-[#3f3f3f] border-b border-black flex items-center shrink-0 text-[11.7px] text-[#d9dde0]">
        <span className="w-[13px]" />
        <span className="w-[43px]">File</span>
        <span className="w-[48px]">Edit</span>
        <span className="w-[54px]">Tools</span>
        <span className="w-[59px]">Group</span>
        <span className="w-[58px]">Views</span>
        <span className="w-[62px]">Create</span>
        <span className="w-[73px]">Modifiers</span>
        <span className="w-[80px]">Animation</span>
        <span className="w-[99px]">Graph Editors</span>
        <span className="w-[81px]">Rendering</span>
        <span className="w-[76px]">Civil View</span>
        <span className="w-[81px]">Customize</span>
        <span className="w-[73px]">Scripting</span>
        <span className="w-[109px]">Content</span>
        <div className="w-[10px] h-[20px] rounded-[2px] bg-[#5e5e5e] flex items-center justify-center"><Dbl c="#eee" /></div>
        <div className="ml-[4px] w-[120px] h-[22px] bg-[#cfcfcf] flex items-center text-[#222] pl-[5px]">
          <svg width="17" height="17" viewBox="0 0 17 17" className="mr-[4px]"><circle cx="8.500" cy="5" r="4" fill="#eee" stroke="#222" /><path d="M5.500 9v2L1 15v1.500h15V15l-4.500-4V9" fill="#eee" stroke="#222" /></svg>
          <span className="w-[76px]">Sign In</span>
          <span className="w-0 h-0 border-l-[5px] border-r-[5px] border-t-[5px] border-l-transparent border-r-transparent border-t-[#111]" />
        </div>
        <span className="ml-[19px] w-[67px] text-[11px] whitespace-nowrap">Workspaces:</span>
        <div className="w-[135px] h-[20px] bg-[#616161] flex items-center justify-between pl-[4px] pr-[6px] text-[11.5px]"><span>Default</span><Caret /></div>
      </div>
      <Toolbar />
      <div className="flex h-[570px] shrink-0">
        <div className="w-[258px] flex flex-col shrink-0 bg-[#444]">
          <div className="h-[8px] flex pt-[2px] pl-[2px] gap-[9px] shrink-0">
            <div className="w-[66px] border-t-2 border-dotted border-[#999] h-0" />
            <div className="w-[173px] border-t-2 border-dotted border-[#999] h-0" />
          </div>
          <div className="flex flex-1">
            <div className="relative w-[40px] bg-gradient-to-r from-[#262626] to-[#333] shrink-0 flex flex-col justify-end pb-[2px]">
              <div className="ml-[10px] w-[19px] h-[19px] rounded-[3px] bg-[#4c4c4c] flex items-center justify-center mb-[12px]"><span className="w-0 h-0 border-y-[5px] border-y-transparent border-l-[6px] border-l-[#ddd]" /></div>
              <div className="ml-[4px] w-[36px] h-[44px] rounded-l-[4px] bg-gradient-to-b from-[#4c6d95] to-[#2f7fd6] pl-[3px] pt-[7px]">
                <div className="w-[31px] h-[27px] bg-[#5a6878] border border-[#222]" />
              </div>
            </div>
            <Explorer />
          </div>
        </div>
        <Viewport />
        <CmdPanel />
      </div>
      <Bottom />
      <Taskbar />
    </div>
  );
}
